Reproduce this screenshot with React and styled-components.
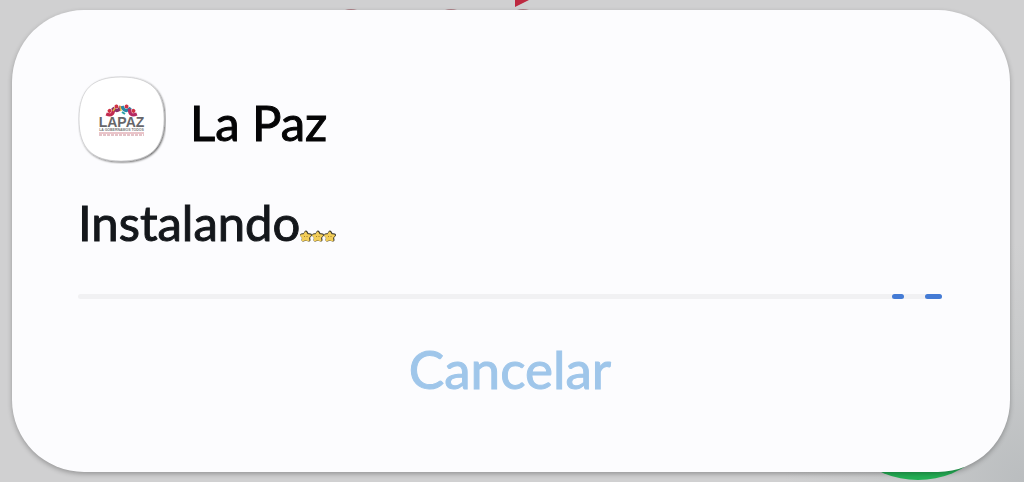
import React, { useState } from 'react';
import styled, { createGlobalStyle } from 'styled-components';

const GlobalStyle = createGlobalStyle`
  * {
    box-sizing: border-box;
  }

  body {
    margin: 0;
    background: #d0d0d1;
    font-family: Lato, 'Liberation Sans', sans-serif;
  }
`

const Screen = styled.main`
  position: relative;
  display: flex;
  min-height: 100vh;
  padding: 10px 14px 10px 12px;
  overflow: hidden;
  background: radial-gradient(circle at 100% 100%, #babdbf 0, #c6c8c9 100px, #d0d0d1 240px);
`

// what shows from the store page behind the dialog
const FloatingCircle = styled.div`
  position: absolute;
  right: 16px;
  bottom: 2px;
  width: 180px;
  height: 180px;
  border-radius: 50%;
  background: #24b055;
`

const RedMark = styled.svg`
  position: absolute;
  top: 0;
  left: 340px;
  width: 200px;
  height: 10px;
`

const Dialog = styled.section`
  position: relative;
  flex: 1;
  display: flex;
  flex-direction: column;
  padding: 66px 68px 64px 66px;
  border-radius: 72px;
  background: #fcfcfe;
  box-shadow: 0 2px 5px rgba(0, 0, 0, .28);
`

const Header = styled.header`
  display: flex;
  align-items: center;
  gap: 24px;
`

const AppIcon = styled.svg`
  width: 88px;
  height: 88px;
  flex: none;
`

const Title = styled.h1`
  margin: 0;
  padding-top: 4px;
  color: #050506;
  font-size: 49px;
  line-height: 56px;
  font-weight: 400;
  -webkit-text-stroke: 1px currentColor;
`

const Status = styled.p`
  display: flex;
  align-items: baseline;
  margin: 28px 0 0;
  color: #14171b;
  font-size: 49px;
  line-height: 60px;
  -webkit-text-stroke: 1px currentColor;
`

const Stars = styled.svg`
  width: 36px;
  height: 12px;
  overflow: visible;
`

const Track = styled.div`
  position: relative;
  height: 5px;
  margin-top: 42px;
  border-radius: 3px;
  background: #f1f1f3;
`

const Segment = styled.span`
  position: absolute;
  top: 0;
  bottom: 0;
  border-radius: 3px;
  background: #447bd5;
`

const CancelButton = styled.button`
  align-self: center;
  margin-top: 38px;
  padding: 0;
  border: 0;
  background: none;
  color: ${({ $off }) => $off ? '#c5c9ce' : '#9fc6ea'};
  font-family: inherit;
  font-size: 53px;
  line-height: 64px;
  -webkit-text-stroke: 1px currentColor;
  cursor: pointer;
`

const segments = [
  { start: 94.2, size: 1.4 },
  { start: 98, size: 2 },
]

const figures = [
  { x: 33, y: 37, turn: -35, color: '#c22b50' },
  { x: 39, y: 33, turn: -12, color: '#8b2f68' },
  { x: 48, y: 33, turn: 12, color: '#2986a8' },
  { x: 54, y: 37, turn: 35, color: '#b52b63' },
]

const STAR = 'M0-4L1.500-1.500 4.500-1 2.500 1.200 3 4 0 3-3 4-2.500 1.200-4.500-1-1.500-1.500Z'

const LaPazIcon = () => (
  <AppIcon viewBox="0 0 88 88" role="img" aria-label="La Paz">
    <defs>
      <filter id="edge" x="-10%" y="-10%" width="120%" height="120%">
        <feDropShadow dx="1" dy="1" stdDeviation="1" floodColor="#000" floodOpacity=".65" />
      </filter>
    </defs>
    <path
      d="M43 1C72 1 86 14 86 43S72 85 43 85 1 72 1 43 14 1 43 1Z"
      fill="#fff"
      stroke="#c4c4c6"
      strokeWidth=".6"
      filter="url(#edge)"
    />
    {figures.map(({ x, y, turn, color }) => (
      <g key={x} transform={`translate(${x} ${y}) rotate(${turn})`}>
        <path d="M-4.500 -2Q0 5 4.500 -2" fill="none" stroke={color} strokeWidth="3.200" />
        <circle cy="-2.500" r="2" fill="#cf3144" />
      </g>
    ))}
    <path d="M35 35l2-3M42 30l1 5" stroke="#e2b63c" strokeWidth="1.500" />
    <path d="M44 36l3 2" stroke="#2aa2a5" strokeWidth="2" />
    <text x="43.500" y="51" textAnchor="middle" fontFamily="Liberation Sans, sans-serif" fontWeight="700" fontSize="14" fill="#66666a">LAPAZ</text>
    <text x="43.500" y="55" textAnchor="middle" fontFamily="Liberation Sans, sans-serif" fontWeight="700" fontSize="3.500" fill="#77777a">LA GOBERNAMOS TODOS</text>
    <path d="M21 57h45" stroke="#d58a94" strokeWidth="1" />
    <path d="M21 59h45" stroke="#c98690" strokeWidth="1" strokeDasharray="3 1" />
  </AppIcon>
)

const StarDots = () => (
  <Stars viewBox="0 0 36 12" role="img" aria-label="...">
    {[6, 18, 30].map(x => (
      <g key={x} transform={`translate(${x} 7)`} strokeLinejoin="round">
        <path d={STAR} fill="#3c382b" stroke="#3c382b" strokeWidth="3" />
        <path d={STAR} transform="translate(-.4 .4)" fill="#f3ce59" stroke="#f3ce59" strokeWidth="1.800" />
        <path d="M-1.500 0v1M1 0v1" stroke="#8b6d28" strokeWidth=".8" />
      </g>
    ))}
  </Stars>
)

const App = () => {
  const [isCanceled, setIsCanceled] = useState(false)

  return (
    <>
      <GlobalStyle />
      <Screen>
        <RedMark viewBox="0 0 200 10" aria-hidden="true">
          <path d="M175 0h14l-14 7Z" fill="#bd2940" />
          <path d="M5 10q6-2 12 0ZM105 10q6-2 12 0ZM177 10q6-2 12 0Z" fill="#ad8087" />
        </RedMark>
        <FloatingCircle />

        <Dialog role="dialog" aria-labelledby="app-name">
          <Header>
            <LaPazIcon />
            <Title id="app-name">La Paz</Title>
          </Header>

          <Status>Instalando<StarDots /></Status>

          <Track role="progressbar" aria-label="Instalando">
            {segments.map(({ start, size }) => (
              <Segment key={start} style={{ left: `${start}%`, width: `${size}%` }} />
            ))}
          </Track>

          <CancelButton type="button" $off={isCanceled} onClick={() => setIsCanceled(true)}>
            Cancelar
          </CancelButton>
        </Dialog>
      </Screen>
    </>
  )
};

export default App;
